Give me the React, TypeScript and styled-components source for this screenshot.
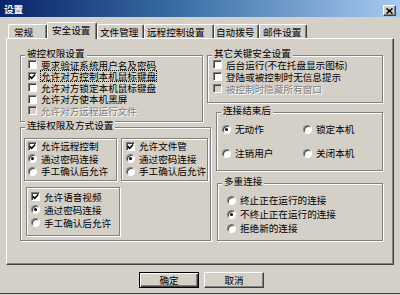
import React from 'react';
import styled, { createGlobalStyle } from 'styled-components';

const FONT = `"Noto Sans CJK SC", "Noto Sans CJK JP", "Noto Sans", sans-serif`;

const GlobalStyle = createGlobalStyle`
  html, body { margin: 0; padding: 0; background: #d4d0c8; }
  #root { width: 400px; height: 295px; }
`;

const Window = styled.div`
  width: 400px;
  height: 295px;
  box-sizing: border-box;
  display: flex;
  flex-direction: column;
  background: #d4d0c8;
  border-bottom: 1px solid #d4d0c8;
  box-shadow: inset 0 -1px 0 #404040;
  font-family: ${FONT};
  font-size: 9.6px;
  color: #000;
  overflow: hidden;
`;

const TitleBar = styled.div`
  flex: none;
  height: 17px;
  display: flex;
  justify-content: space-between;
  padding: 0 4px;
  background: linear-gradient(to right, #0a246a 0%, #3a6ea5 45%, #a6caf0 100%);
`;

const Title = styled.span`
  align-self: center;
  display: inline-block;
  height: 11px;
  color: #fff;
  font-weight: bold;
  line-height: 11px;
  margin-top: 1px;
`;

const CloseButton = styled.span`
  margin-top: 5px;
  width: 13px;
  height: 11px;
  box-sizing: border-box;
  background: #d4d0c8;
  border: 1px solid;
  border-color: #fff #404040 #404040 #fff;
  box-shadow: inset -1px -1px 0 #808080;
  display: flex;
  align-items: center;
  justify-content: center;
`;

const Body = styled.div`
  display: flex;
  flex-direction: column;
  padding: 0 6px;
`;

const TabStrip = styled.div`
  display: flex;
  align-items: flex-end;
  height: 16px;
  margin-top: 5px;
  padding-left: 2px;
`;

const Tab = styled.div<{ $w: number; $pl: number; $active?: boolean }>`
  position: relative;
  box-sizing: border-box;
  width: ${(p) => p.$w}px;
  height: ${(p) => (p.$active ? 17 : 14)}px;
  margin-bottom: ${(p) => (p.$active ? -1 : 0)}px;
  z-index: ${(p) => (p.$active ? 1 : 0)};
  padding-left: ${(p) => p.$pl - 1}px;
  padding-bottom: ${(p) => (p.$active ? 2 : 0)}px;
  display: flex;
  align-items: center;
  white-space: nowrap;
  background: #d4d0c8;
  border-top: 1px solid #fff;
  border-left: 1px solid #fff;
  border-right: 1px solid #404040;
  border-radius: 2px 2px 0 0;
  box-shadow: inset -1px 0 0 #808080;
  line-height: 10px;
`;

const Panel = styled.div`
  box-sizing: border-box;
  height: 227px;
  display: flex;
  align-items: flex-start;
  padding: 16px 0 0 13px;
  border-top: 1px solid #fff;
  border-left: 1px solid #fff;
  border-right: 1px solid #404040;
  border-bottom: 1px solid #404040;
  box-shadow: inset -1px -1px 0 #808080;
`;

const Column = styled.div<{ $w: number; $ml?: number }>`
  display: flex;
  flex-direction: column;
  width: ${(p) => p.$w}px;
  margin-left: ${(p) => p.$ml ?? 0}px;
`;

const GroupBox = styled.div<{ $w: number; $h: number; $ml?: number; $mt?: number }>`
  flex: none;
  box-sizing: border-box;
  width: ${(p) => p.$w}px;
  height: ${(p) => p.$h}px;
  margin-left: ${(p) => p.$ml ?? 0}px;
  margin-top: ${(p) => p.$mt ?? 0}px;
  border: 1px solid #808080;
  box-shadow: inset 1px 1px 0 #fff, 1px 1px 0 #fff;
  display: flex;
  flex-direction: column;
`;

const Legend = styled.div`
  align-self: flex-start;
  margin: -9px 0 0 4px;
  padding: 0 2px;
  height: 12px;
  line-height: 12px;
  background: #d4d0c8;
  white-space: nowrap;
`;

const GroupBody = styled.div<{ $pl: number; $mt: number }>`
  display: flex;
  flex-direction: column;
  padding-left: ${(p) => p.$pl}px;
  margin-top: ${(p) => p.$mt}px;
`;

const SubRow = styled.div`
  display: flex;
  gap: 4px;
`;

const RadioGrid = styled.div`
  display: grid;
  grid-template-columns: 81px auto;
  grid-auto-rows: 12px;
  row-gap: 12px;
`;

const Row = styled.div<{ $h: number }>`
  display: flex;
  align-items: center;
  gap: 4px;
  height: ${(p) => p.$h}px;
  white-space: nowrap;
`;

const Label = styled.span<{ $disabled?: boolean; $focus?: boolean }>`
  display: inline-block;
  height: 10px;
  line-height: 10px;
  color: ${(p) => (p.$disabled ? '#808080' : '#000')};
  text-shadow: ${(p) => (p.$disabled ? '1px 1px 0 #fff' : 'none')};
  outline: ${(p) => (p.$focus ? '1px dotted #000' : 'none')};
  outline-offset: 0;
`;

const CheckBoxBox = styled.span<{ $disabled?: boolean }>`
  flex: none;
  width: 9px;
  height: 9px;
  box-sizing: border-box;
  background: ${(p) => (p.$disabled ? '#d4d0c8' : '#fff')};
  border: 1px solid;
  border-color: #808080 #fff #fff #808080;
  box-shadow: inset 1px 1px 0 #404040;
  display: flex;
  align-items: center;
  justify-content: center;
`;

const RadioCircle = styled.span<{ $on?: boolean }>`
  flex: none;
  width: 9px;
  height: 9px;
  box-sizing: border-box;
  border-radius: 50%;
  background: #fff;
  border: 1px solid;
  border-color: #808080 #fff #fff #808080;
  box-shadow: inset 1px 1px 0 #404040;
  display: flex;
  align-items: center;
  justify-content: center;
  &::after {
    content: '';
    display: ${(p) => (p.$on ? 'block' : 'none')};
    width: 3px;
    height: 3px;
    border-radius: 50%;
    background: #000;
  }
`;

const ButtonRow = styled.div`
  display: flex;
  justify-content: center;
  gap: 5px;
  margin-top: 7px;
  padding-left: 3px;
`;

const Button = styled.div<{ $default?: boolean }>`
  width: 60px;
  height: 16px;
  box-sizing: border-box;
  display: flex;
  align-items: center;
  justify-content: center;
  line-height: 10px;
  background: #d4d0c8;
  border: 1px solid;
  border-color: ${(p) => (p.$default ? '#000' : '#fff #404040 #404040 #fff')};
  box-shadow: ${(p) =>
    p.$default
      ? 'inset 1px 1px 0 #fff, inset -1px -1px 0 #404040, inset -2px -2px 0 #808080'
      : 'inset -1px -1px 0 #808080'};
`;

const Check: React.FC<{ h: number; label: string; checked?: boolean; disabled?: boolean; focus?: boolean }> = ({
  h,
  label,
  checked,
  disabled,
  focus,
}) => (
  <Row $h={h}>
    <CheckBoxBox $disabled={disabled}>
      {checked && (
        <svg width="7" height="7" viewBox="0 0 7 7">
          <path d="M0.8 3.4 L2.7 5.3 L6.2 1.6" stroke="#000" strokeWidth="1.5" fill="none" />
        </svg>
      )}
    </CheckBoxBox>
    <Label $disabled={disabled} $focus={focus}>
      {label}
    </Label>
  </Row>
);

const Radio: React.FC<{ h: number; label: string; on?: boolean }> = ({ h, label, on }) => (
  <Row $h={h}>
    <RadioCircle $on={on} />
    <Label>{label}</Label>
  </Row>
);

const tabs = [
  { label: '常规', w: 39, pl: 6 },
  { label: '安全设置', w: 50, pl: 5, active: true },
  { label: '文件管理', w: 47, pl: 3 },
  { label: '远程控制设置', w: 70, pl: 3 },
  { label: '自动拨号', w: 45, pl: 2 },
  { label: '邮件设置', w: 48, pl: 4 },
];

export default function App() {
  return (
    <>
      <GlobalStyle />
      <Window>
        <TitleBar>
          <Title>设置</Title>
          <CloseButton>
            <svg width="7" height="6" viewBox="0 0 7 6">
              <path d="M0.5 0.5 L6.5 5.5 M6.5 0.5 L0.5 5.5" stroke="#000" strokeWidth="1.6" />
            </svg>
          </CloseButton>
        </TitleBar>
        <Body>
          <TabStrip>
            {tabs.map((t) => (
              <Tab key={t.label} $w={t.w} $pl={t.pl} $active={t.active}>
                {t.label}
              </Tab>
            ))}
          </TabStrip>
          <Panel>
            <Column $w={191}>
              <GroupBox $w={183} $h={67}>
                <Legend>被控权限设置</Legend>
                <GroupBody $pl={7} $mt={0}>
                  <Check h={11.5} label="要求验证系统用户名及密码" />
                  <Check h={11.5} label="允许对方控制本机鼠标键盘" checked focus />
                  <Check h={11.5} label="允许对方锁定本机鼠标键盘" />
                  <Check h={11.5} label="允许对方使本机黑屏" />
                  <Check h={11.5} label="允许对方远程运行文件" disabled />
                </GroupBody>
              </GroupBox>
              <GroupBox $w={191} $h={114} $mt={5}>
                <Legend>连接权限及方式设置</Legend>
                <GroupBody $pl={3} $mt={7}>
                  <SubRow>
                    <GroupBox $w={93} $h={43}>
                      <GroupBody $pl={3} $mt={1}>
                        <Check h={12.5} label="允许远程控制" checked />
                        <Radio h={12.5} label="通过密码连接" on />
                        <Radio h={12.5} label="手工确认后允许" />
                      </GroupBody>
                    </GroupBox>
                    <GroupBox $w={87} $h={43}>
                      <GroupBody $pl={4} $mt={1}>
                        <Check h={12.5} label="允许文件管" checked />
                        <Radio h={12.5} label="通过密码连接" on />
                        <Radio h={12.5} label="手工确认后允许" />
                      </GroupBody>
                    </GroupBox>
                  </SubRow>
                  <GroupBox $w={94} $h={49} $ml={2} $mt={6}>
                    <GroupBody $pl={4} $mt={2}>
                      <Check h={13} label="允许语音视频" checked />
                      <Radio h={13} label="通过密码连接" on />
                      <Radio h={13} label="手工确认后允许" />
                    </GroupBody>
                  </GroupBox>
                </GroupBody>
              </GroupBox>
            </Column>
            <Column $w={176} $ml={-4}>
              <GroupBox $w={176} $h={48}>
                <Legend>其它关键安全设置</Legend>
                <GroupBody $pl={5} $mt={0}>
                  <Check h={11.5} label="后台运行(不在托盘显示图标)" />
                  <Check h={12} label="登陆或被控制时无信息提示" />
                  <Check h={12} label="被控制时隐藏所有窗口" disabled />
                </GroupBody>
              </GroupBox>
              <GroupBox $w={167} $h={59} $ml={9} $mt={9}>
                <Legend>连接结束后</Legend>
                <GroupBody $pl={5} $mt={7}>
                  <RadioGrid>
                    <Radio h={12} label="无动作" on />
                    <Radio h={12} label="锁定本机" />
                    <Radio h={12} label="注销用户" />
                    <Radio h={12} label="关闭本机" />
                  </RadioGrid>
                </GroupBody>
              </GroupBox>
              <GroupBox $w={166} $h={58} $ml={10} $mt={12}>
                <Legend>多重连接</Legend>
                <GroupBody $pl={9} $mt={6}>
                  <Radio h={14} label="终止正在运行的连接" />
                  <Radio h={14} label="不终止正在运行的连接" on />
                  <Radio h={14} label="拒绝新的连接" />
                </GroupBody>
              </GroupBox>
            </Column>
          </Panel>
          <ButtonRow>
            <Button $default>确定</Button>
            <Button>取消</Button>
          </ButtonRow>
        </Body>
      </Window>
    </>
  );
}
